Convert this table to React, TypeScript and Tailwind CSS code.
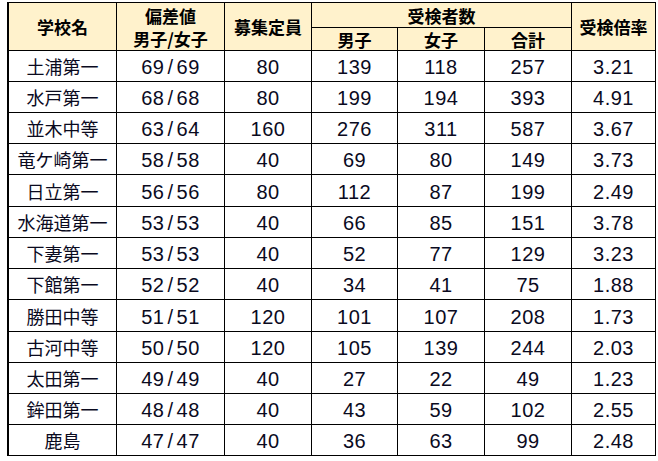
import React from "react"

interface Row {
  name: string
  score: string
  quota: string
  boys: string
  girls: string
  total: string
  ratio: string
}

const rows: Row[] = [
  { name: "土浦第一", score: "69/69", quota: "80", boys: "139", girls: "118", total: "257", ratio: "3.21" },
  { name: "水戸第一", score: "68/68", quota: "80", boys: "199", girls: "194", total: "393", ratio: "4.91" },
  { name: "並木中等", score: "63/64", quota: "160", boys: "276", girls: "311", total: "587", ratio: "3.67" },
  { name: "竜ケ崎第一", score: "58/58", quota: "40", boys: "69", girls: "80", total: "149", ratio: "3.73" },
  { name: "日立第一", score: "56/56", quota: "80", boys: "112", girls: "87", total: "199", ratio: "2.49" },
  { name: "水海道第一", score: "53/53", quota: "40", boys: "66", girls: "85", total: "151", ratio: "3.78" },
  { name: "下妻第一", score: "53/53", quota: "40", boys: "52", girls: "77", total: "129", ratio: "3.23" },
  { name: "下館第一", score: "52/52", quota: "40", boys: "34", girls: "41", total: "75", ratio: "1.88" },
  { name: "勝田中等", score: "51/51", quota: "120", boys: "101", girls: "107", total: "208", ratio: "1.73" },
  { name: "古河中等", score: "50/50", quota: "120", boys: "105", girls: "139", total: "244", ratio: "2.03" },
  { name: "太田第一", score: "49/49", quota: "40", boys: "27", girls: "22", total: "49", ratio: "1.23" },
  { name: "鉾田第一", score: "48/48", quota: "40", boys: "43", girls: "59", total: "102", ratio: "2.55" },
  { name: "鹿島", score: "47/47", quota: "40", boys: "36", girls: "63", total: "99", ratio: "2.48" },
]

const cell = "flex items-center justify-center border-r border-b border-black"
const head = `${cell} bg-[#fff2cc] font-bold text-[17px] text-black`
const num = `${cell} text-[20px] tracking-[0.5px] text-[#0a0a1e] pt-[2px] font-['Liberation_Sans',sans-serif]`

export default function App() {
  return (
    <div className="w-[658px] h-[461px] bg-white pt-[2px] pl-[7px]">
      <div className="grid w-[649px] border-t border-l-2 border-black grid-cols-[108px_108px_87px_86px_87px_87px_84px] grid-rows-[25px_23px_31px_31px_31px_31px_32px_31px_31px_31px_32px_31px_31px_31px_31px] font-['Noto_Sans_CJK_JP',sans-serif] leading-none">
        {/* header */}
        <div className={`${head} row-span-2`}>学校名</div>
        <div className={`${head} row-span-2 flex-col gap-[6px]`}>
          <span>偏差値</span>
          <span>男子/女子</span>
        </div>
        <div className={`${head} row-span-2`}>募集定員</div>
        <div className={`${head} col-span-3`}>受検者数</div>
        <div className={`${head} row-span-2`}>受検倍率</div>
        <div className={head}>男子</div>
        <div className={head}>女子</div>
        <div className={head}>合計</div>

        {/* body */}
        {rows.map((r) => {
          const [a, b] = r.score.split("/")
          return (
            <React.Fragment key={r.name}>
              <div className={`${cell} text-[18px] text-[#0a0a1e]`}>{r.name}</div>
              <div className={num}>
                {a}
                <span className="mx-[3px]">/</span>
                {b}
              </div>
              <div className={num}>{r.quota}</div>
              <div className={num}>{r.boys}</div>
              <div className={num}>{r.girls}</div>
              <div className={num}>{r.total}</div>
              <div className={num}>{r.ratio}</div>
            </React.Fragment>
          )
        })}
      </div>
    </div>
  )
}
